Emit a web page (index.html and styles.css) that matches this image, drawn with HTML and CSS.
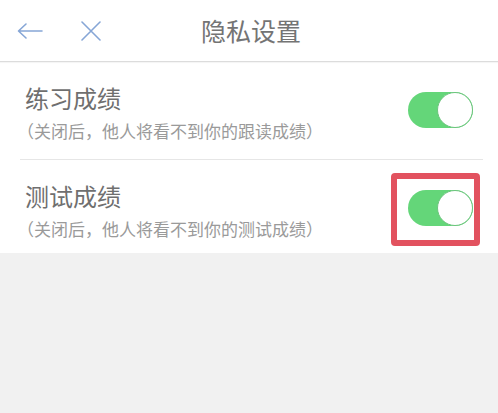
FILE: index.html
```html
<!DOCTYPE html>
<html lang="zh-CN">
<head>
<meta charset="utf-8">
<title>隐私设置</title>
<link rel="stylesheet" href="styles.css">
</head>
<body>
<div class="page">
  <header class="header">
    <div class="nav">
      <svg class="icon back" width="28" height="18" viewBox="0 0 28 18">
        <path d="M26 9 H3 M10 2 L2.5 9 L10 16" fill="none" stroke="#86a6d6" stroke-width="1.6" stroke-linecap="round" stroke-linejoin="round"/>
      </svg>
      <svg class="icon close" width="24" height="20" viewBox="0 0 24 20">
        <path d="M3 1 L21 19 M21 1 L3 19" fill="none" stroke="#86a6d6" stroke-width="1.6" stroke-linecap="round"/>
      </svg>
    </div>
    <h1 class="title">隐私设置</h1>
  </header>
  <section class="list">
    <div class="row">
      <div class="text">
        <div class="label">练习成绩</div>
        <div class="desc">（关闭后，他人将看不到你的跟读成绩）</div>
      </div>
      <div class="switch-wrap">
        <div class="switch"><span class="knob"></span></div>
      </div>
    </div>
    <div class="row last">
      <div class="text">
        <div class="label">测试成绩</div>
        <div class="desc">（关闭后，他人将看不到你的测试成绩）</div>
      </div>
      <div class="switch-wrap">
        <div class="switch"><span class="knob"></span></div>
        <div class="highlight"></div>
      </div>
    </div>
  </section>
</div>
</body>
</html>
```

FILE: styles.css
```css
* { box-sizing: border-box; margin: 0; padding: 0; }
html, body {
  width: 498px;
  height: 413px;
  background: #f1f1f1;
  font-family: "Noto Sans CJK SC", "Noto Sans", sans-serif;
  overflow: hidden;
}
.page { display: flex; flex-direction: column; }
.header {
  position: relative;
  height: 62px;
  background: #fff;
  border-bottom: 1px solid #dcdcdc;
  box-shadow: 0 1px 1px rgba(0,0,0,0.04);
  display: flex;
  align-items: center;
  justify-content: center;
}
.nav {
  position: absolute;
  left: 16px;
  top: 21px;
  display: flex;
  align-items: center;
  gap: 35px;
}
.icon { display: block; }
.title {
  font-size: 25px;
  font-weight: 400;
  color: #747474;
  line-height: 30px;
  margin-top: -2px;
  margin-left: 4px;
}
.list {
  background: #fff;
  padding: 0 15px 0 20px;
}
.row {
  display: flex;
  justify-content: space-between;
  align-items: flex-start;
  height: 98px;
  border-bottom: 1px solid #e6e6e6;
  padding: 22px 10px 0 5px;
}
.row.last { border-bottom: none; height: 93px; }
.label {
  font-size: 24px;
  line-height: 28px;
  color: #6f6f6f;
}
.desc {
  font-size: 17px;
  line-height: 20px;
  color: #9a9a9a;
  margin-top: 9px;
  margin-left: -8px;
  text-spacing-trim: space-all;
  white-space: nowrap;
}
.switch-wrap {
  position: relative;
  margin-top: 8px;
}
.switch {
  position: relative;
  width: 65px;
  height: 36px;
  border-radius: 18px;
  background: #64d679;
}
.knob {
  position: absolute;
  right: 0;
  top: 0;
  width: 36px;
  height: 36px;
  border-radius: 50%;
  background: #fff;
  border: 1.5px solid #6cc47d;
}
.highlight {
  position: absolute;
  left: -17px;
  top: -17px;
  width: 89px;
  height: 73px;
  border: 6px solid #e2525f;
  border-radius: 4px;
}
```
